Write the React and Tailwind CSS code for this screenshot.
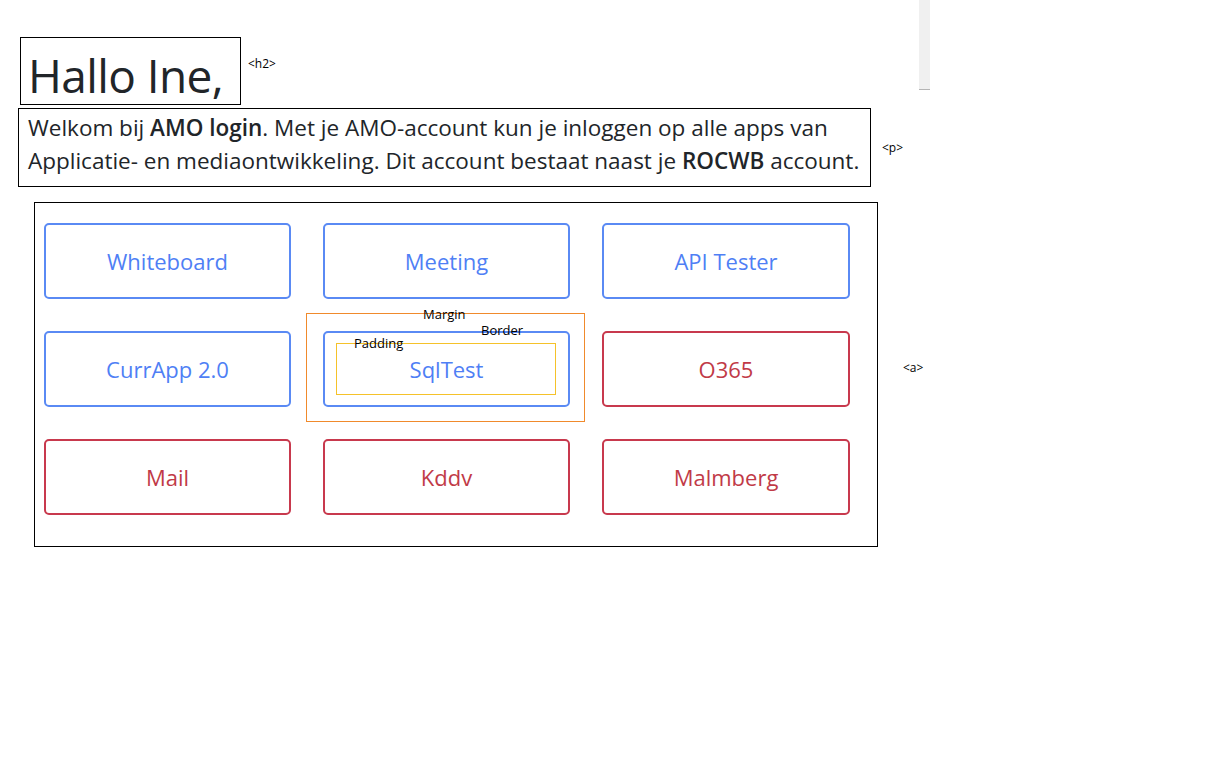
const apps = [
    { name: "Whiteboard", color: "blue" },
    { name: "Meeting", color: "blue" },
    { name: "API Tester", color: "blue" },
    { name: "CurrApp 2.0", color: "blue" },
    { name: "SqlTest", color: "blue", annotated: true },
    { name: "O365", color: "red" },
    { name: "Mail", color: "red" },
    { name: "Kddv", color: "red" },
    { name: "Malmberg", color: "red" },
];

const AppButton = ({ app }) => {
    const colors =
        app.color === "blue"
            ? "border-[#5a8af4] text-[#4f7ff5]"
            : "border-[#c8394d] text-[#c13a47]";

    return (
        <div className="relative">
            <a
                href="#"
                className={`flex h-[76px] items-center justify-center rounded-[5px] border-2 text-[22px] ${colors}`}
            >
                {app.name}
            </a>

            {/* box model overlay */}
            {app.annotated && (
                <>
                    <div className="pointer-events-none absolute left-[-17px] top-[-18px] h-[109px] w-[279px] border border-[#f08a2c]" />
                    <div className="pointer-events-none absolute left-[13px] top-[12px] h-[52px] w-[220px] border border-[#f5c22a]" />
                    <span className="absolute left-[100px] top-[-25px] text-[13px] leading-4 text-black">Margin</span>
                    <span className="absolute left-[158px] top-[-9px] text-[13px] leading-4 text-black">Border</span>
                    <span className="absolute left-[31px] top-[4px] text-[13px] leading-4 text-black">Padding</span>
                </>
            )}
        </div>
    );
};

const App = () => {
    return (
        <div className="relative min-h-[784px] w-[1206px] bg-white font-['Open_Sans',sans-serif] text-[#212529]">
            {/* scrollbar remnant */}
            <div className="absolute left-[919px] top-0 h-[90px] w-[11px] border-b border-[#b4b4b4] bg-[#f0f0f0]" />

            <div className="flex flex-col pt-[37px]">
                {/* Heading */}
                <div className="ml-[20px] flex items-start gap-[7px]">
                    <h2 className="h-[68px] w-[221px] border border-black pl-[7px] text-[46px] leading-[74px] tracking-[-0.6px] whitespace-nowrap">
                        Hallo Ine,
                    </h2>
                    <span className="mt-[18px] text-[12px] text-black">&lt;h2&gt;</span>
                </div>

                {/* Intro */}
                <div className="ml-[18px] mt-[3px] flex items-center gap-[11px]">
                    <p className="h-[79px] w-[853px] border border-black pl-[9px] pt-[2px] text-[22.5px] leading-[33px] whitespace-nowrap">
                        Welkom bij <b className="font-semibold">AMO login</b>. Met je AMO-account kun je inloggen op alle apps van
                        <br />
                        Applicatie- en mediaontwikkeling. Dit account bestaat naast je <b className="font-semibold">ROCWB</b> account.
                    </p>
                    <span className="text-[12px] text-black">&lt;p&gt;</span>
                </div>

                {/* Apps */}
                <div className="ml-[34px] mt-[15px] flex items-start gap-[25px]">
                    <div className="grid h-[345px] w-[844px] grid-cols-[247px_247px_248px] content-start gap-x-[32px] gap-y-[32px] border border-black pl-[9px] pt-[20px]">
                        {apps.map((app) => (
                            <AppButton key={app.name} app={app} />
                        ))}
                    </div>
                    <span className="mt-[157px] text-[12px] text-black">&lt;a&gt;</span>
                </div>
            </div>
        </div>
    );
};

export default App;
